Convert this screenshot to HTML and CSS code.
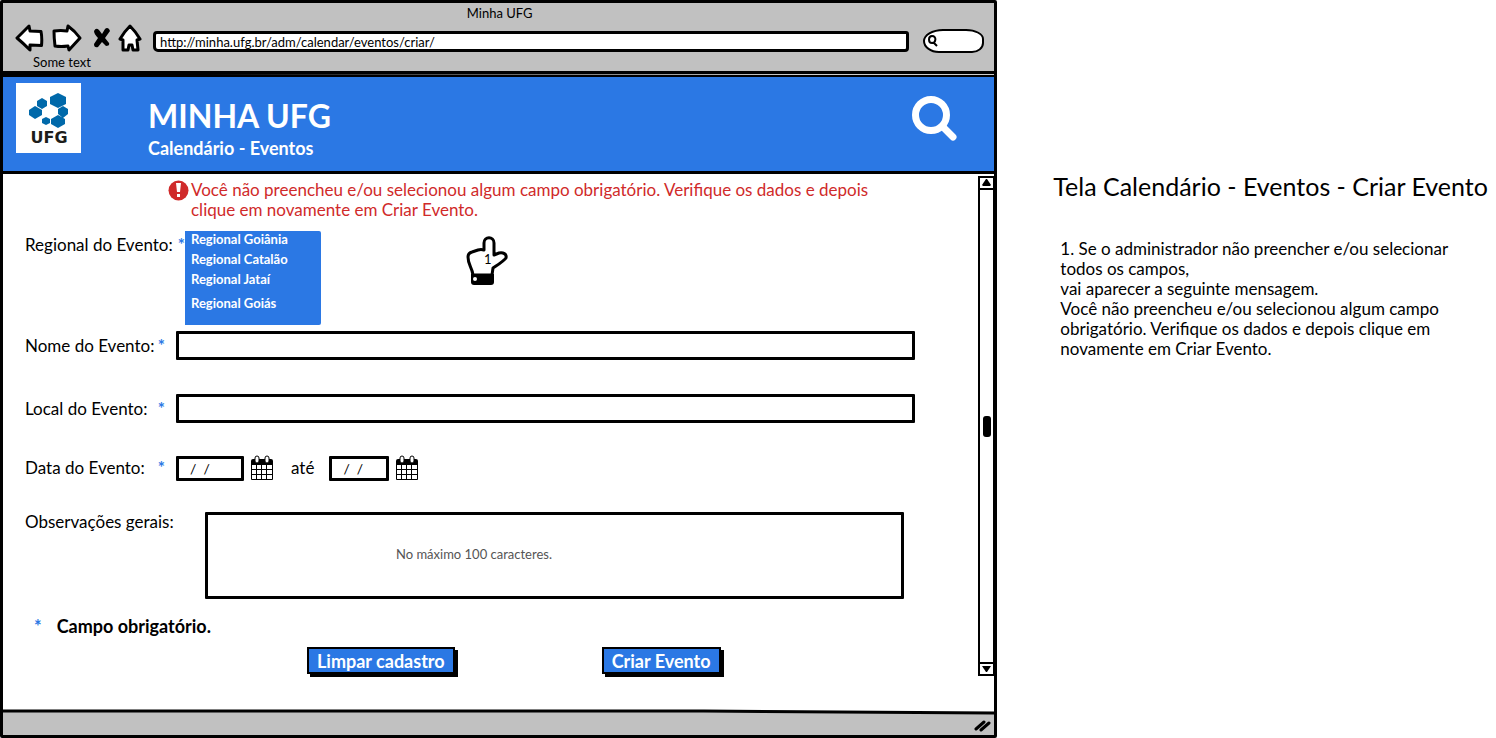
FILE: index.html
```html
<!DOCTYPE html>
<html lang="pt-BR">
<head>
<meta charset="utf-8">
<meta name="viewport" content="width=device-width, initial-scale=1">
<title>Minha UFG</title>
<link rel="stylesheet" href="styles.css">
</head>
<body>
<div class="page">
  <section class="browser" aria-label="Minha UFG">
    <header class="chrome">
      <p class="chrome-title">Minha UFG</p>
      <div class="toolbar">
        <button class="tool back" type="button" aria-label="Voltar">
          <svg width="29" height="28" viewBox="0 0 29 28"><path d="M2 14 14 2l1 5 11 .5c1 5 1 9 .5 14L15 21v5Q8 19 2 14Z"/></svg>
        </button>
        <button class="tool forward" type="button" aria-label="Avançar">
          <svg width="30" height="28" viewBox="0 0 30 28"><path d="m28 14-11 12-1-4Q9 23 3 22 2 14 2 7q7-1 13 0l1-5Q23 7 28 14Z"/></svg>
        </button>
        <button class="tool stop" type="button" aria-label="Parar">
          <svg width="17" height="20" viewBox="0 0 17 20"><path class="solid" d="M1 3q2-4 5-1l3 4 3-5q2-2 4 0l1 2-5 7 4 5q1 3-3 3l-4-4-4 5q-4 1-4-3l4-6Q1 6 1 3Z"/></svg>
        </button>
        <button class="tool home" type="button" aria-label="Início">
          <svg width="24" height="28" viewBox="0 0 24 28"><path d="M12 2q6 6 10 13l-3 1 1 10h-5l-1-5h-3l-1 5H5V16l-3-1Q6 8 12 2Z"/></svg>
        </button>
        <input class="address" type="text" aria-label="Endereço" value="http://minha.ufg.br/adm/calendar/eventos/criar/">
        <label class="quick-search">
          <svg width="12" height="14" viewBox="0 0 12 14"><path d="M5 2C1 2 1 9 5 9s5-7 0-7ZM7 9l3 3"/></svg>
          <input type="search" aria-label="Pesquisar">
        </label>
      </div>
      <p class="bookmark">Some text</p>
    </header>
    <div class="seam"></div>

    <div class="banner">
      <svg class="logo" width="65" height="70" viewBox="0 0 65 70" role="img" aria-label="UFG">
        <path fill="#fff" d="M0 0h65v70H0z"/>
        <path fill="#0069aa" d="m42 10 8 4v7l-8 4-8-4v-7ZM26 15l5 3v5l-5 3-5-3v-5ZM19 23l7 4v5l-7 4-6-4v-5ZM47 23l5 3v5l-5 4-5-4v-5ZM30 34l4 2v4l-4 2-4-2v-4ZM42 32l7 4v5l-7 4-7-4v-5Z"/>
        <text class="logo-text" x="33" y="60" text-anchor="middle">UFG</text>
      </svg>
      <div class="banner-text">
        <h1>MINHA UFG</h1>
        <p>Calendário - Eventos</p>
      </div>
      <button class="banner-search" type="button" aria-label="Buscar">
        <svg width="46" height="46" viewBox="0 0 46 46"><circle cx="19" cy="19" r="15.500"/><path d="m31 31 10 10"/></svg>
      </button>
    </div>

    <div class="viewport">
      <form class="form">
        <div class="alert" role="alert">
          <svg width="21" height="21" viewBox="0 0 21 21"><circle cx="10.500" cy="10.500" r="10" fill="#d02a2a"/><path fill="#fff" d="M8 3h5l-1 9H9ZM9 14h3v3H9z"/></svg>
          <p>Você não preencheu e/ou selecionou algum campo obrigatório. Verifique os dados e depois<br>clique em novamente em Criar Evento.</p>
        </div>

        <div class="row row-region">
          <label for="regional"><span>Regional do Evento:</span><span class="req">*</span></label>
          <select id="regional" multiple size="4">
            <option>Regional Goiânia</option>
            <option>Regional Catalão</option>
            <option>Regional Jataí</option>
            <option>Regional Goiás</option>
          </select>
          <svg class="hand" width="42" height="50" viewBox="0 0 42 50" role="img" aria-label="Nota 1">
            <path fill="#fff" stroke="#000" stroke-width="3" stroke-linejoin="round" d="M7 39C6 31 2 29 2 21q0-4 4-5l6-2q3-1 6 0V7c0-7 10-7 10 0v12l5-2c4-1 8 1 7 5-2 3-7 6-13 10l-1 7Z"/>
            <path d="M5 38h23v8q0 3-3 3H8q-3 0-3-3Z"/>
            <circle cx="9" cy="43" r="2" fill="#fff"/>
            <text class="hand-text" x="18" y="28">1</text>
          </svg>
        </div>

        <div class="row row-name">
          <label for="nome"><span>Nome do Evento:</span><span class="req">*</span></label>
          <input class="box wide" id="nome" type="text">
        </div>

        <div class="row row-place">
          <label for="local"><span>Local do Evento:</span><span class="req">*</span></label>
          <input class="box wide" id="local" type="text">
        </div>

        <div class="row row-date">
          <label for="inicio"><span>Data do Evento:</span><span class="req">*</span></label>
          <input class="box date" id="inicio" type="text" value="/  /">
          <button class="calendar" type="button" aria-label="Escolher data inicial">
            <svg width="24" height="26" viewBox="0 0 24 26"><path d="M1 6q0-2 2-2h18q2 0 2 2v18q0 1-1 1H2q-1 0-1-1Z"/><path fill="#fff" d="M2 10h4v4H2zm5 0h4v4H7zm5 0h4v4h-4zm5 0h5v4h-5zM2 15h4v4H2zm5 0h4v4H7zm5 0h4v4h-4zm5 0h5v4h-5zM2 20h4v4H2zm5 0h4v4H7zm5 0h4v4h-4zm5 0h5v4h-5z"/><rect x="5" y="1" width="4" height="7" rx="2" fill="#fff" stroke="#000"/><rect x="15" y="1" width="4" height="7" rx="2" fill="#fff" stroke="#000"/></svg>
          </button>
          <label class="until" for="fim">até</label>
          <input class="box date date-end" id="fim" type="text" value="/  /">
          <button class="calendar" type="button" aria-label="Escolher data final">
            <svg width="24" height="26" viewBox="0 0 24 26"><path d="M1 6q0-2 2-2h18q2 0 2 2v18q0 1-1 1H2q-1 0-1-1Z"/><path fill="#fff" d="M2 10h4v4H2zm5 0h4v4H7zm5 0h4v4h-4zm5 0h5v4h-5zM2 15h4v4H2zm5 0h4v4H7zm5 0h4v4h-4zm5 0h5v4h-5zM2 20h4v4H2zm5 0h4v4H7zm5 0h4v4h-4zm5 0h5v4h-5z"/><rect x="5" y="1" width="4" height="7" rx="2" fill="#fff" stroke="#000"/><rect x="15" y="1" width="4" height="7" rx="2" fill="#fff" stroke="#000"/></svg>
          </button>
        </div>

        <div class="row row-notes">
          <label for="obs">Observações gerais:</label>
          <textarea class="box" id="obs" placeholder="No máximo 100 caracteres."></textarea>
        </div>

        <p class="legend"><span class="req">*</span><strong>Campo obrigatório.</strong></p>

        <div class="actions">
          <button class="action" type="reset">Limpar cadastro</button>
          <button class="action" type="button">Criar Evento</button>
        </div>
      </form>

      <div class="scrollbar" aria-hidden="true">
        <svg class="cap" width="9" height="8" viewBox="0 0 9 8"><path d="M4 0h1l4 6-1 1H1L0 6Z"/></svg>
        <div class="track"><span class="thumb"></span></div>
        <svg class="cap cap-end" width="9" height="8" viewBox="0 0 9 8"><path d="M0 1h9L5 7H4Z"/></svg>
      </div>
    </div>

    <footer class="statusbar">
      <svg class="edge" viewBox="0 0 990 6" preserveAspectRatio="none" aria-hidden="true"><path fill="#fff" d="M0 0h990v4L700 1H0Z"/><path fill="none" stroke="#000" stroke-width="3" d="M0 2h700l290 2"/></svg>
      <svg class="grip" width="18" height="14" viewBox="0 0 18 14" aria-hidden="true"><path d="M2 10 10 3M7 11l8-7"/></svg>
    </footer>
  </section>

  <aside class="notes">
    <h2>Tela Calendário - Eventos - Criar Evento</h2>
    <p>1. Se o administrador não preencher e/ou selecionar<br>todos os campos,<br>vai aparecer a seguinte mensagem.<br>Você não preencheu e/ou selecionou algum campo<br>obrigatório. Verifique os dados e depois clique em<br>novamente em Criar Evento.</p>
  </aside>
</div>
</body>
</html>
```

FILE: styles.css
```css
* {
  box-sizing: border-box;
}

body {
  margin: 0;
  background: #fff;
  color: #000;
  font: 17px/20px Lato, "Liberation Sans", sans-serif;
}

h1,
h2,
p {
  margin: 0;
  font-weight: 400;
}

button,
input,
select,
textarea {
  margin: 0;
  padding: 0;
  border: 0;
  background: none;
  color: inherit;
  font: inherit;
}

svg {
  display: block;
  flex: none;
}

.page {
  display: grid;
  grid-template-columns: 2fr 1fr;
  min-height: 100vh;
}

.browser {
  display: flex;
  flex-direction: column;
  min-width: 0;
  border: 3px solid #000;
  border-radius: 2px;
}

/* Window chrome */

.chrome {
  padding: 0 10px 0 12px;
  border-bottom: 3px solid #000;
  background: #c1c1c1;
  font-size: 13px;
}

.chrome-title {
  text-align: center;
}

.toolbar {
  display: flex;
  align-items: center;
  height: 30px;
}

.tool svg {
  fill: #fff;
  stroke: #000;
  stroke-width: 3px;
  stroke-linejoin: round;
}

.tool .solid {
  fill: #000;
  stroke: none;
}

.forward {
  margin-left: 8px;
}

.stop {
  margin-left: 11px;
}

.home {
  margin-left: 8px;
}

.address {
  flex: 1;
  min-width: 0;
  height: 21px;
  margin: 7px 14px 0 11px;
  padding: 0 4px;
  border: 3px solid #000;
  border-radius: 4px 3px 4px 5px;
  background: #fff;
}

.quick-search {
  display: flex;
  align-items: center;
  width: 61px;
  height: 24px;
  margin-top: 6px;
  padding-left: 2px;
  border: 2px solid #000;
  border-radius: 20px 18px 12px 16px / 12px 10px 10px 12px;
  background: #fff;
}

.quick-search svg {
  fill: none;
  stroke: #000;
  stroke-width: 2px;
}

.quick-search input {
  width: 30px;
}

.bookmark {
  padding-left: 18px;
  line-height: 18px;
}

.seam {
  height: 1px;
  background: linear-gradient(90deg, #000 20%, #ccc 80%);
}

/* Page banner */

.banner {
  display: flex;
  align-items: flex-start;
  padding: 6px 36px 13px 13px;
  border: solid #000;
  border-width: 2px 0 3px;
  background: #2b78e4;
  color: #fff;
}

.logo-text {
  fill: #1d1d1b;
  font: bold 16px "DejaVu Sans", sans-serif;
}

.banner-text {
  flex: 1;
  padding: 16px 0 0 67px;
}

.banner-text h1 {
  font-size: 32px;
  font-weight: 700;
  line-height: 34px;
}

.banner-text p {
  padding-top: 5px;
  font-size: 18px;
  font-weight: 700;
}

.banner-search {
  margin-top: 13px;
}

.banner-search svg {
  fill: none;
  stroke: #fff;
  stroke-width: 7px;
  stroke-linecap: round;
}

/* Form */

.viewport {
  display: flex;
  flex: 1;
}

.form {
  flex: 1;
  min-width: 0;
  padding: 6px 63px 32px 22px;
}

.alert {
  display: flex;
  gap: 2px;
  min-height: 40px;
  margin: 0 -63px 0 143px;
  color: #d02a2a;
}

.row {
  display: flex;
  align-items: center;
}

.row > label:first-child {
  display: flex;
  flex: none;
  justify-content: space-between;
  width: 151px;
  padding-right: 11px;
}

.req {
  color: #2b78e4;
  font-weight: 700;
}

.row-region {
  align-items: flex-start;
  margin-top: 11px;
}

.row-region > label:first-child {
  width: 160px;
  padding: 4px 0 0;
}

.row-region select {
  width: 136px;
  height: 94px;
  border-radius: 0 2px 2px 0;
  background: #2b78e4;
  color: #fff;
  font-size: 13px;
  line-height: 20px;
  overflow: hidden;
}

.row-region option {
  min-height: 20px;
  padding: 0 6px;
  font-weight: 700;
}

.row-region option:last-child {
  padding-top: 4px;
}

.hand {
  margin: 5px 0 0 145px;
}

.hand-text {
  font-size: 13px;
}

.row-name {
  margin-top: 6px;
}

.row-place {
  margin-top: 34px;
}

.row-date {
  margin-top: 32px;
}

.row-notes {
  align-items: flex-start;
  margin-top: 31px;
}

.box {
  border: 3px solid #000;
  border-radius: 1px;
  background: #fff;
}

.wide {
  flex: 1;
  min-width: 0;
  height: 29px;
}

.date {
  width: 68px;
  height: 25px;
  padding: 0 11px;
  font-size: 14px;
  white-space: pre;
}

.date-end {
  width: 60px;
}

.calendar {
  margin-left: 6px;
}

.until {
  padding: 0 15px 0 17px;
}

.row-notes > label:first-child {
  width: 180px;
  padding: 0;
}

.row-notes textarea {
  flex: 1;
  min-width: 0;
  height: 87px;
  margin-right: 11px;
  padding: 29px 0 0 188px;
  font-size: 13px;
  resize: none;
}

.row-notes textarea::placeholder {
  color: #555;
}

.legend {
  display: flex;
  gap: 15px;
  padding: 17px 0 0 9px;
  font-size: 18px;
}

.actions {
  display: flex;
  gap: 147px;
  padding: 11px 0 0 282px;
}

.action {
  height: 27px;
  padding: 0 8px;
  border: 2px solid #000;
  background: #2b78e4;
  box-shadow: 3px 3px 0 #000;
  color: #fff;
  font-size: 18px;
  font-weight: 700;
  white-space: nowrap;
}

/* Scrollbar */

.scrollbar {
  display: flex;
  flex-direction: column;
  align-items: center;
  width: 16px;
  margin: 2px 0 33px;
  border: 2px solid #000;
  border-right-width: 1px;
}

.cap {
  margin: 1px 0;
}

.track {
  display: flex;
  flex: 1;
  align-items: center;
  align-self: stretch;
  justify-content: center;
  border: solid #000;
  border-width: 2px 0;
}

.thumb {
  width: 8px;
  height: 21px;
  border-radius: 3px;
  background: #000;
}

/* Status bar */

.statusbar {
  position: relative;
  display: flex;
  align-items: flex-end;
  justify-content: flex-end;
  height: 26px;
  padding: 0 2px 2px;
  background: #c1c1c1;
}

.edge {
  position: absolute;
  top: 0;
  left: 0;
  width: 100%;
  height: 6px;
}

.grip {
  fill: none;
  stroke: #000;
  stroke-width: 3px;
  stroke-linecap: round;
}

/* Notes beside the window */

.notes {
  padding: 172px 0 0 56px;
}

.notes h2 {
  font-size: 25px;
  line-height: 28px;
  white-space: nowrap;
}

.notes p {
  padding: 39px 0 0 7px;
  white-space: nowrap;
}
```
